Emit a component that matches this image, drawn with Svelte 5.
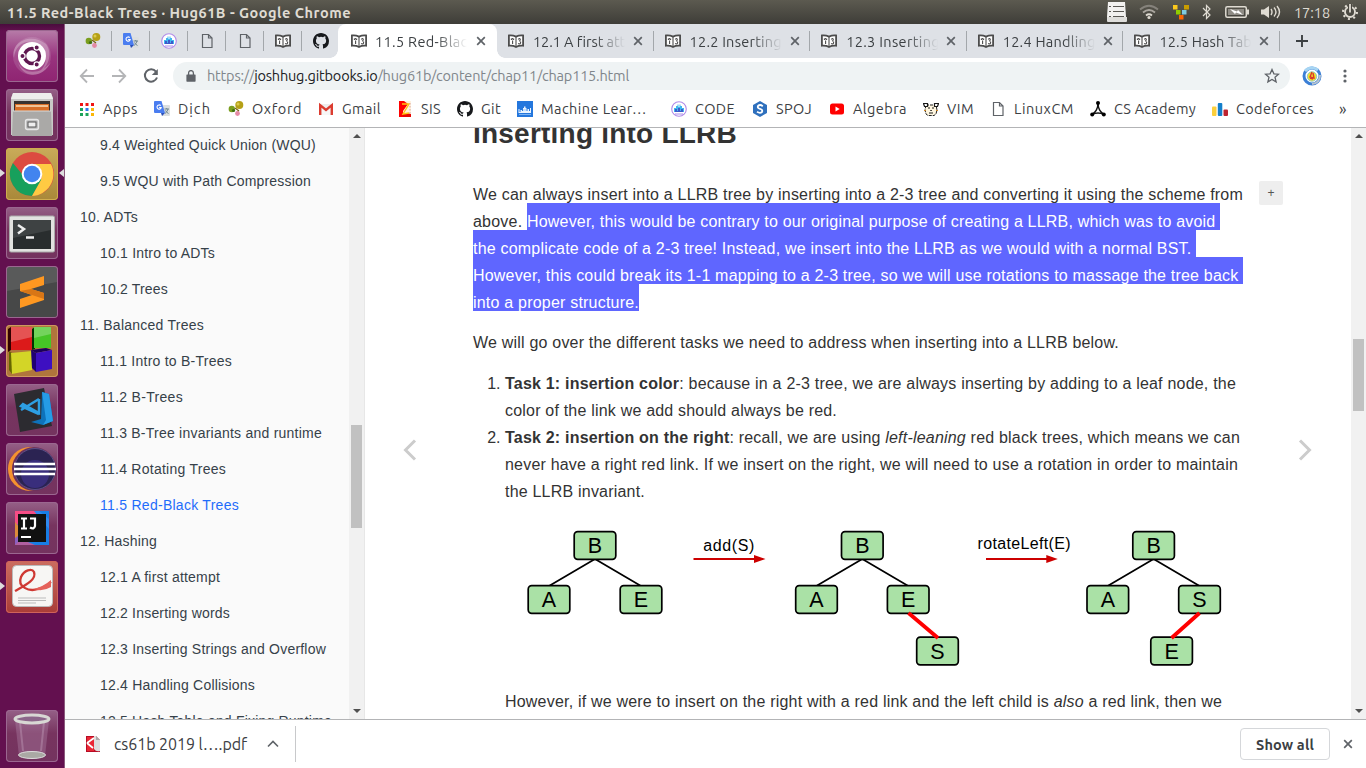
<script>
  // Spreads the letters of a label so that it fills the given width.
  function fit(node, width) {
    const natural = node.getBoundingClientRect().width;
    const count = [...node.textContent].length;
    node.style.letterSpacing = (width - natural) / count + 'px';
  }

  const launcher = ['ubuntu', 'files', 'chrome', 'terminal', 'sublime', 'blocks', 'vscode', 'eclipse', 'idea', 'pdf'];
  const running = ['chrome', 'blocks', 'pdf'];
  const pinned = ['oxford', 'translate', 'code', 'doc', 'doc', 'book', 'github'];
  const tabs = [
    { title: '12.1 A first attempt', width: 126 },
    { title: '12.2 Inserting words', width: 137 },
    { title: '12.3 Inserting Strings', width: 145 },
    { title: '12.4 Handling Collisions', width: 160 },
    { title: '12.5 Hash Table and', width: 133 }
  ];
  const bookmarks = [
    ['apps', 'Apps', 75, 35],
    ['translate', 'Dịch', 74, 33],
    ['oxford', 'Oxford', 90, 50],
    ['gmail', 'Gmail', 79, 39],
    ['sis', 'SIS', 60, 20],
    ['github', 'Git', 60, 20],
    ['ml', 'Machine Lear…', 154, 106],
    ['code', 'CODE', 81, 40],
    ['spoj', 'SPOJ', 77, 36],
    ['youtube', 'Algebra', 94, 54],
    ['vim', 'VIM', 67, 27],
    ['doc', 'LinuxCM', 100, 60],
    ['csa', 'CS Academy', 122, 82],
    ['cf', 'Codeforces', 127, 78]
  ];
  const chapters = [
    [1, '9.4 Weighted Quick Union (WQU)', 216],
    [1, '9.5 WQU with Path Compression', 211],
    [0, '10. ADTs', 58],
    [1, '10.1 Intro to ADTs', 115],
    [1, '10.2 Trees', 68],
    [0, '11. Balanced Trees', 124],
    [1, '11.1 Intro to B-Trees', 132],
    [1, '11.2 B-Trees', 83],
    [1, '11.3 B-Tree invariants and runtime', 222],
    [1, '11.4 Rotating Trees', 126],
    [1, '11.5 Red-Black Trees', 139],
    [0, '12. Hashing', 77],
    [1, '12.1 A first attempt', 120],
    [1, '12.2 Inserting words', 130],
    [1, '12.3 Inserting Strings and Overflow', 226],
    [1, '12.4 Handling Collisions', 155],
    [1, '12.5 Hash Table and Fixing Runtime', 232]
  ];
  const nodes = [
    ['B', 595, 545.5], ['A', 549, 599.5], ['E', 641, 599.5],
    ['B', 862.3, 545.5], ['A', 816.5, 599.5], ['E', 908.2, 599.5], ['S', 937.5, 651],
    ['B', 1153.6, 545.5], ['A', 1107.8, 599.5], ['S', 1199.5, 599.5], ['E', 1171.6, 651]
  ];
  const edges = [595, 862.3, 1153.6];
</script>

{#snippet icon(name)}
  <svg class="i16" viewBox="0 0 16 16">
    {#if name === 'oxford'}
      <circle cx="3.800" cy="8" r="3.200" fill="#7a9e1e" /><circle cx="11.300" cy="4" r="4" fill="#b5a016" /><circle cx="9.500" cy="12.500" r="2.400" fill="#e58aa5" />
      <circle cx="5.500" cy="9.500" r="1.600" fill="#3f6d10" /><circle cx="10" cy="3" r="1.500" fill="#dccb4a" /><path d="M7 7l4 3" stroke="#776017" stroke-width="1.300" />
    {:else if name === 'translate'}
      <path d="M7 4h8q1 0 1 1v9q0 1-1 1H8z" fill="#dcdfe0" /><path d="M1 0h6.500l3.500 12H1Q0 12 0 11V1q0-1 1-1z" fill="#4a7df0" /><path d="M7 12h4l-3 3z" fill="#2b50b8" />
      <path d="M6.700 4.600A2.100 2.100 0 1 0 7.200 6.500H5.100" fill="none" stroke="#fff" stroke-width="1.100" /><path d="M10.500 8h4.500M12.700 7v1M14 8q-.7 3-3 4.500M11.500 9.500q1 2 3 3" stroke="#6f8790" fill="none" />
    {:else if name === 'code'}
      <circle cx="8" cy="8" r="7.300" fill="#fff" stroke="#b18be8" stroke-width="1.100" /><path d="M3 11V7h2V5h1.500V3.500h1V6h1V3.500h1V5H11v2h2v4z" fill="#3fb7ee" /><path d="M4 11V8h2v2h1V7h2v3h1V8h2v3z" fill="#3e58c9" /><path d="M4 13h8" stroke="#a98bea" />
    {:else if name === 'doc'}
      <path d="M3.500 1.500h6l3.500 3.500v9.500h-9.500zM9.500 1.500V5H13" fill="none" stroke="#5f6368" stroke-width="1.200" />
    {:else if name === 'book'}
      <path d="M.9 2.500Q4.500 2 8 3.600 11.500 2 15.100 2.500v10.200Q11 12.300 8 14 5 12.300.9 12.700z" fill="#fff" stroke="#4c4c4c" stroke-width="1.800" />
      <path d="M8 4v9.500M4.400 5v1.500M4.600 7.500v3.500M3.400 5.500v1.500M5.600 5.500v1.500M10.300 6.500q1.300-2 2 0 0 1.200-1.300 1.800M12.500 8.500q.6 2.200-1.200 2.500l-1.200-.5" fill="none" stroke="#4c4c4c" stroke-width="1.100" />
    {:else if name === 'github'}
      <path fill="#17191c" d="M8 0C3.580 0 0 3.580 0 8c0 3.540 2.290 6.530 5.470 7.590.4.070.55-.17.55-.38v-1.490c-2.010.37-2.530-.49-2.690-.94-.09-.23-.48-.94-.82-1.130-.28-.15-.68-.52-.01-.53.63-.01 1.080.58 1.230.82.72 1.210 1.870.87 2.330.66.070-.52.28-.87.51-1.070-1.780-.2-3.640-.89-3.640-3.950 0-.87.31-1.590.82-2.150-.08-.2-.36-1.020.08-2.120 0 0 .67-.21 2.200.82a7.400 7.400 0 0 1 4 0c1.530-1.040 2.200-.82 2.200-.82.44 1.100.16 1.920.08 2.120.51.56.82 1.270.82 2.150 0 3.070-1.870 3.750-3.650 3.950.29.25.54.73.54 1.480v2.200c0 .21.15.46.55.38A8 8 0 0 0 16 8c0-4.420-3.580-8-8-8z" />
    {:else if name === 'apps'}
      <path d="M1 2h3v3H1zM6.500 2h3v3h-3zM12 2h3v3h-3z" fill="#f01414" /><path d="M1 7h3v3H1z" fill="#1da35a" /><path d="M6.500 7h3v3h-3z" fill="#2f79ee" /><path d="M12 7h3v3h-3z" fill="#fbb709" /><path d="M1 12h3v3H1zM6.500 12h3v3h-3z" fill="#1da35a" /><path d="M12 12h3v3h-3z" fill="#fbb709" />
    {:else if name === 'gmail'}
      <path d="M1 3h14v11H1z" fill="#eee" /><path d="M3 14V6l5 4 5-4v8" fill="#f7f7f7" stroke="#ddd" stroke-width=".5" /><path d="M2.200 14V4.200L8 9l5.800-4.800V14" fill="none" stroke="#dc3c30" stroke-width="2.400" />
    {:else if name === 'sis'}
      <path d="M2 0h12v16H2z" fill="#fff2df" /><path d="M2 0h5l4 3-5 7-4 2z" fill="#f00" /><path d="M2 13l8-1 4 1v3H2z" fill="#e80700" /><path d="M2 0h4v16H2z" fill="#f00" /><path d="M5 3h7L6 13l6-1" fill="none" stroke="#ffc414" stroke-width="1.400" /><path d="M13 2v10" stroke="#d9a4a0" stroke-dasharray="1.500 1.500" />
    {:else if name === 'ml'}
      <path d="M0 0h16v16H0z" fill="#2477dd" /><path d="M1.500 12V8h1v3h1V9H5v1h1V7h1V5.500h1.500V7h1v3h1V8H12v2h1V7h1v5z" fill="#e9f4ff" /><path d="M2 13.500h12M7 8v2M9 8v2" stroke="#8fc2fa" stroke-width=".8" />
    {:else if name === 'spoj'}
      <path d="M8 0l7 4v8l-7 4-7-4V4z" fill="#2f70bd" /><path d="M10.800 5.200Q8 3 6 5q-1 2 2 2.800T10 11q-2 1.700-5-.2" fill="none" stroke="#fff" stroke-width="1.800" />
    {:else if name === 'youtube'}
      <rect x="1" y="2.500" width="14" height="11" rx="2.500" fill="#f00" /><path d="M6.500 5.500v5l4.200-2.500z" fill="#fff" />
    {:else if name === 'vim'}
      <path d="M3 4h10l1 5-1 4-2 1.500H5L3 13 2 9z" fill="#fff6df" stroke="#222" stroke-width="1" stroke-dasharray="3 1" /><path d="M.5 2.500h4v3h-3zM11.500 2.500h4l-1 3h-3z" fill="#fff" stroke="#181818" stroke-width="1.200" /><path d="M5 7h2M9 7h2M7.300 9.500h1.500M6 12h4" stroke="#181818" stroke-width="1.200" /><path d="M1 9.500h2M13 9.500h2" stroke="#c98629" />
    {:else if name === 'csa'}
      <path d="M8 2c0 7-3 9-6 11.500 4-2 8-2 12 0C11 11 8 9 8 2" fill="#fff" stroke="#111" stroke-width="1.500" /><circle cx="8" cy="2" r="2" /><circle cx="2.200" cy="13.500" r="2" /><circle cx="13.800" cy="13.500" r="2" />
    {:else if name === 'cf'}
      <rect x="0" y="5.500" width="4.500" height="9.500" rx="1" fill="#fbcf3c" /><rect x="5.800" y="2" width="4.500" height="13" rx="1" fill="#147fcb" /><rect x="11.500" y="8.500" width="4.500" height="6.500" rx="1" fill="#bd2430" />
    {/if}
  </svg>
{/snippet}

{#snippet app(name)}
  <svg class="i52" viewBox="0 0 52 52">
    {#if name === 'ubuntu'}
      <circle cx="26" cy="26" r="19" fill="#fff" opacity=".12" />
      <path d="M8 28C4 12 25 2 40 14 48 25 41 40 30 44 45 35 41 20 31 14 20 8 9 15 8 28zM12 32c5 13 23 13 33 0-8 17-29 17-33 0z" fill="#fff" opacity=".25" />
      <circle cx="26" cy="26" r="14" fill="#fff" /><circle cx="26" cy="26" r="7.500" fill="none" stroke="#5f1750" stroke-width="3.400" />
      <g fill="#5f1750" stroke="#fff" stroke-width="1.200"><circle cx="16.500" cy="26" r="2.600" /><circle cx="30.700" cy="17.500" r="2.600" /><circle cx="30.700" cy="34.500" r="2.600" /></g>
    {:else if name === 'files'}
      <path d="M7 4h38l2 5v37H5V9z" fill="#c9c9c7" /><path d="M7 4h38l2 6H5z" fill="#ededeb" /><path d="M8 12h36v10H8z" fill="#393330" /><path d="M9 15h34v7H9z" fill="#d86f28" /><path d="M10 17h32" stroke="#fbe1bb" stroke-width="1.500" /><path d="M7 22h38l1 25H6z" fill="#aaa9a7" /><path d="M7 22h38" stroke="#d9d9d7" />
      <rect x="19.500" y="30.500" width="13" height="10" rx="2" fill="#bbb" stroke="#e7e7e7" stroke-width="1.300" /><rect x="22" y="33" width="8" height="5" fill="#eee" stroke="#555" />
    {:else if name === 'chrome'}
      <circle cx="26" cy="26" r="22" fill="#dc4b40" /><path d="M6.900 15A22 22 0 0 0 26 48l10-17H26q-9 0-10-5z" fill="#17a05c" /><path d="M45 16H26q9 2 10 10 0 3-1 6l-9 16A22 22 0 0 0 45 16z" fill="#ffca43" /><circle cx="26" cy="26" r="10.300" fill="#fff" /><circle cx="26" cy="26" r="8.300" fill="#4284ef" />
    {:else if name === 'terminal'}
      <rect x="3.500" y="9" width="45" height="36" rx="1.500" fill="#e2e2e0" stroke="#aaa" /><rect x="7" y="13" width="38" height="29" fill="#292d2e" /><path d="M7 13h38v10L7 31z" fill="#fff" opacity=".1" /><path d="M12 18l6 4-6 4.500M20 30.500h8" fill="none" stroke="#eee" stroke-width="2.500" />
    {:else if name === 'sublime'}
      <rect x="1" y="1" width="50" height="50" rx="3" fill="#474848" /><path d="M1 4q0-3 3-3h44q3 0 3 3v12L1 25z" fill="#fff" opacity=".1" /><path d="M14 18l24-8v9L25 23l13 4v7L14 42v-9l12-4-12-4z" fill="#ff9821" /><path d="M14 25l12 4 12 4v-6l-13-4z" fill="#d87616" />
    {:else if name === 'blocks'}
      <path d="M2 4l3-2v23l-3 2z" fill="#300" /><path d="M5 2h21v23H5z" fill="#dc1a1a" /><path d="M26 4l3-2v22l-3 1z" fill="#030" /><path d="M28 2h17v21H28z" fill="#46c526" /><path d="M3 26l3 2v21l-3-4z" fill="#660" /><path d="M5 28l21-2v19L6 49z" fill="#d3d527" /><path d="M25 25l15-2 6 2-16 3z" fill="#1a0058" /><path d="M30 28l16-3v19l-16 3z" fill="#3d0fc1" /><path d="M25 25l5 3v19l-4-4z" fill="#200073" /><path d="M5 2h21v10L5 17zM28 2h17v7l-17 4z" fill="#fff" opacity=".25" />
    {:else if name === 'vscode'}
      <path d="M8 10l30-6 8 38-32 6z" fill="#2c2b30" /><path d="M25 38l10-3 1-27 7 2 4 27-10 4z" fill="#0e72ba" /><path d="M36 8l7 2 4 27-10 4 3-5z" fill="#259be6" /><path d="M33 15v14L17 20l-2 2 18 8M15 26L33 15" fill="none" stroke="#2d9fe4" stroke-width="2.500" />
    {:else if name === 'eclipse'}
      <circle cx="24" cy="26" r="22" fill="#f5922f" /><circle cx="28" cy="26" r="22" fill="#6d315b" /><circle cx="29" cy="26" r="20.500" fill="#2b2352" stroke="#5a4f86" /><circle cx="29" cy="31" r="14" fill="#42369a" opacity=".6" /><path d="M8 21h41M8 26h42M8 31h41" stroke="#fff" stroke-width="2.500" />
    {:else if name === 'idea'}
      <path d="M9 9h34v34H9z" fill="#187de5" /><path d="M9 9h24L9 32z" fill="#f54c85" /><path d="M9 22h8v21H9z" fill="#8b60c1" /><path d="M9 20l5 6-2 8-3 2z" fill="#dc8b3a" /><path d="M33 9l10 8v10L28 9z" fill="#2f8af0" /><path d="M9 43l6-6 14 6z" fill="#b05fa0" /><rect x="12" y="12" width="28" height="28" fill="#111" />
      <path d="M15 16.500h6M18 16v10M15 26.500h6M24 16.500h5V24q-1 4-5 1.500M15 35h10" stroke="#fff" stroke-width="2.200" fill="none" />
    {:else if name === 'pdf'}
      <rect x="6.500" y="4.500" width="40" height="41" rx="4" fill="#f7f6f4" stroke="#bbb" /><path d="M9 30C18 25 31 19 28 11c-2-4-10-2-13 5-4 10 8 15 17 12q6-1 13-7" fill="none" stroke="#cf3933" stroke-width="2.300" /><path d="M27 28q10-2 18-9v7q-8 5-18 2z" fill="#e5625b" /><path d="M12 37h28M12 39.500h28M12 42h18" stroke="#bbb" />
    {:else if name === 'trash'}
      <path d="M9 10h34l-4 36q-13 5-26 0z" fill="#b58caf" opacity=".35" /><path d="M14 12l3 29M38 12l-3 29" stroke="#d5b9d1" opacity=".3" stroke-width="2" /><ellipse cx="26" cy="45" rx="13.500" ry="3.500" fill="#aaa9a4" stroke="#ddd" /><ellipse cx="26" cy="9" rx="17" ry="4" fill="#8c668a" stroke="#d8d8d4" stroke-width="3" />
    {/if}
  </svg>
{/snippet}

{#snippet cross()}
  <svg class="cross" viewBox="0 0 10 10"><path d="M1.200 1.200l7.600 7.600M8.800 1.200L1.200 8.800" stroke="#5f6368" stroke-width="1.700" /></svg>
{/snippet}

<div class="desktop">
  <header class="panel">
    <b><span use:fit={344}>11.5 Red-Black Trees · Hug61B - Google Chrome</span></b>
    <div class="tray">
      <svg width="22" height="24" viewBox="0 0 22 24"><path d="M2 2h17l1 15H1z" fill="#f2f1ef" /><path d="M1 17h20v4q0 1-1 1H2q-1 0-1-1z" fill="#dfdedb" /><path d="M3 6.500h2M7 6.500h11M3 11.500h2M7 11.500h11M3 16.500h2M7 16.500h11" stroke="#5a5853" stroke-width="1.200" /></svg>
      <svg class="wifi" width="20" height="24" viewBox="0 0 20 24"><g fill="none" stroke-width="1.800"><path d="M1 9.500q9-7.500 18 0" stroke="#85827b" /><path d="M4 12.500q6-5 12 0" stroke="#aaa69f" /><path d="M7 15.500q3-2.500 6 0" stroke="#dfdbd2" /></g><circle cx="10" cy="17.500" r="1.600" fill="#dfdbd2" /></svg>
      <svg class="grid" width="16" height="24" viewBox="0 0 16 24"><path d="M0 5h4.500v4.500H0z" fill="#fcc91c" /><path d="M11 5h5v4.500h-5z" fill="#c99d00" /><path d="M3 10h4.500v4.500H3z" fill="#92cd00" /><path d="M9 10h4.500v4.500H9z" fill="#7ecbe0" /><path d="M6 15h4.500v4.500H6z" fill="#fe6601" /></svg>
      <svg class="bt" width="10" height="24" viewBox="0 0 10 24"><path d="M1 8l7 7-3.500 3.500v-13L8 9l-7 7" fill="none" stroke="#dfdbd2" stroke-width="1.200" /></svg>
      <svg class="bat" width="24" height="24" viewBox="0 0 24 24"><rect x=".8" y="6.800" width="20.500" height="10.500" rx="1.500" fill="none" stroke="#dfdbd2" stroke-width="1.500" /><path d="M3 9h16v6H3z" fill="#8f8c85" /><path d="M22 9.500h2v5h-2z" fill="#dfdbd2" /><path d="M5 9l7 2.500 1-1.500 5 5-7-2.500-1 1.500z" fill="#fff" /></svg>
      <svg class="snd" width="22" height="24" viewBox="0 0 22 24"><path d="M1 9.500h3L9 6v12l-5-3.500H1z" fill="#dfdbd2" /><path d="M11 9q2 3 0 6M14 7.500q4 4.500 0 9M17 6q5 6 0 12" fill="none" stroke="#dfdbd2" stroke-width="1.400" /></svg>
      <span class="clock"><span use:fit={36}>17:18</span></span>
      <svg class="gear" width="16" height="24" viewBox="0 0 16 24"><circle cx="8" cy="12" r="5" fill="none" stroke="#dfdbd2" stroke-width="1.900" /><circle cx="8" cy="12" r="7" fill="none" stroke="#dfdbd2" stroke-width="2" stroke-dasharray="2 3.500" /><path d="M6 4h4v8H6z" fill="#48463f" /><path d="M8 4v8.500" stroke="#dfdbd2" stroke-width="1.800" /></svg>
    </div>
  </header>

  <div class="workspace">
    <nav class="launcher">
      {#each launcher as name}
        <div class="slot {name}">
          {@render app(name)}
          {#if running.includes(name)}<i class="pip"></i>{/if}
          {#if name === 'chrome'}<i class="pip right"></i>{/if}
        </div>
      {/each}
      <div class="slot trash">{@render app('trash')}</div>
    </nav>

    <section class="browser">
      <div class="tabs">
        {#each pinned as name, i}
          <div class="pin" class:last={i === 6}>{@render icon(name)}</div>
        {/each}
        <div class="tab active">{@render icon('book')}<div class="title"><span use:fit={141}>11.5 Red-Black Trees</span></div>{@render cross()}</div>
        {#each tabs as tab}
          <div class="tab">{@render icon('book')}<div class="title"><span use:fit={tab.width}>{tab.title}</span></div>{@render cross()}</div>
        {/each}
        <svg class="plus" viewBox="0 0 12 12"><path d="M6 0v12M0 6h12" stroke="#3c4043" stroke-width="1.900" /></svg>
      </div>

      <div class="toolbar">
        <svg class="i16" viewBox="0 0 16 16"><path d="M15 8H2M8 1.500L1.700 8 8 14.500" fill="none" stroke="#b4b5b7" stroke-width="1.800" /></svg>
        <svg class="i16" viewBox="0 0 16 16"><path d="M1 8h13M8 1.500L14.300 8 8 14.500" fill="none" stroke="#b4b5b7" stroke-width="1.800" /></svg>
        <svg class="i16" viewBox="0 0 16 16"><path d="M13 3.600A6.200 6.200 0 1 0 14 9.500" fill="none" stroke="#5f6368" stroke-width="2" /><path d="M14.800 1v6H8.800z" fill="#5f6368" /></svg>
        <div class="omnibox">
          <svg class="lock" viewBox="0 0 10 12"><path d="M1 4.500h8q.6 0 .6.600v6q0 .6-.6.600H1q-.6 0-.6-.6v-6q0-.6.600-.6z" fill="#5f6368" /><path d="M2.600 5V3a2.400 2.400 0 0 1 4.800 0v2" fill="none" stroke="#5f6368" stroke-width="1.300" /></svg>
          <div class="url"><span use:fit={422}>https://<em>joshhug.gitbooks.io</em>/hug61b/content/chap11/chap115.html</span></div>
          <svg class="i16 star" viewBox="0 0 16 16"><path d="M8 1.500l1.900 4.300 4.600.4-3.500 3 1.100 4.600L8 11.400l-4.100 2.400L5 9.200l-3.500-3 4.600-.4z" fill="none" stroke="#5f6368" stroke-width="1.300" /></svg>
        </div>
        <svg class="avatar" viewBox="0 0 20 20"><circle cx="10" cy="10" r="8" fill="#fff" stroke="#3b7fd6" stroke-width="3" /><path d="M3 5Q9-1 16 4" stroke="#a7d5f3" stroke-width="3" fill="none" /><path d="M18 9q0 8-8 9" stroke="#b8c4cf" stroke-width="2" fill="none" /><circle cx="10" cy="10.500" r="4.700" fill="#f3e22d" stroke="#8fc9c6" /><path d="M10 6l-2 5 4 1-1-5M8 12l3 1" stroke="#d93a2b" stroke-width="1.400" fill="none" /></svg>
        <svg class="dots" viewBox="0 0 4 14"><g fill="#5f6368"><circle cx="2" cy="2" r="1.600" /><circle cx="2" cy="7" r="1.600" /><circle cx="2" cy="12" r="1.600" /></g></svg>
      </div>

      <div class="bookmarks">
        {#each bookmarks as [name, label, width, text]}
          <div class="mark" style:width="{width}px">{@render icon(name)}<span use:fit={text}>{label}</span></div>
        {/each}
        <span class="more">»</span>
      </div>

      <div class="page">
        <aside>
          <ul>
            {#each chapters as [level, label, width]}
              <li class:sub={level} class:current={label.startsWith('11.5')}><span use:fit={width}>{label}</span></li>
            {/each}
          </ul>
          <div class="scroll side"><i class="up"></i><b></b><i class="down"></i></div>
        </aside>

        <main>
          <div class="gutter left"><svg width="14" height="22" viewBox="0 0 14 22"><path d="M12 1.500L2.500 11l9.500 9.500" fill="none" stroke="#ccc" stroke-width="3" /></svg></div>
          <article>
            <h2><span use:fit={264}>Inserting into LLRB</span></h2>
            <div class="selected">
              <div><span use:fit={770}>We can always insert into a LLRB tree by inserting into a 2-3 tree and converting it using the scheme from</span></div>
              <div><span use:fit={54}>above.{' '}</span><mark><span use:fit={693}>However, this would be contrary to our original purpose of creating a LLRB, which was to avoid{' '}</span></mark></div>
              <div><mark><span use:fit={723}>the complicate code of a 2-3 tree! Instead, we insert into the LLRB as we would with a normal BST.{' '}</span></mark></div>
              <div><mark><span use:fit={770}>However, this could break its 1-1 mapping to a 2-3 tree, so we will use rotations to massage the tree back{' '}</span></mark></div>
              <div><mark><span use:fit={166}>into a proper structure.</span></mark></div>
            </div>
            <p><span use:fit={646}>We will go over the different tasks we need to address when inserting into a LLRB below.</span></p>
            <ol>
              <li><div><span use:fit={731}><strong>Task 1: insertion color</strong>: because in a 2-3 tree, we are always inserting by adding to a leaf node, the</span></div>
                <div><span use:fit={332}>color of the link we add should always be red.</span></div></li>
              <li><div><span use:fit={735}><strong>Task 2: insertion on the right</strong>: recall, we are using <em>left-leaning</em> red black trees, which means we can</span></div>
                <div><span use:fit={733}>never have a right red link. If we insert on the right, we will need to use a rotation in order to maintain</span></div>
                <div><span use:fit={140}>the LLRB invariant.</span></div></li>
            </ol>
            <svg class="figure" width="738" height="183" viewBox="505 505 738 183">
              {#each edges as x}
                <path d="M{x - 46} 586L{x} 559l46 27" fill="none" stroke="#000" stroke-width="1.700" />
              {/each}
              {#each nodes as [label, x, y]}
                <rect x={x - 20.8} y={y - 13.8} width="41.600" height="27.600" rx="3.500" fill="#aae1a6" stroke="#000" stroke-width="1.700" />
                <text x={x} y={y + 7.5} font-size="21.500" text-anchor="middle">{label}</text>
              {/each}
              <path d="M908.500 613l29.500 25M1199.500 613l-28 25" stroke="#f00" stroke-width="3.800" />
              <path d="M693.500 559H756M986 559h62" stroke="#c00" stroke-width="1.900" />
              <path d="M754 555l11.500 4-11.500 4zM1046.300 555l11.500 4-11.500 4z" fill="#c00" />
              <text x="703.300" y="551" font-size="16" textLength="51">add(S)</text>
              <text x="977.500" y="549" font-size="16" textLength="93">rotateLeft(E)</text>
            </svg>
            <p class="next"><span use:fit={717}>However, if we were to insert on the right with a red link and the left child is <em>also</em> a red link, then we</span></p>
          </article>
          <div class="gutter right"><span class="add">+</span><svg width="14" height="22" viewBox="0 0 14 22"><path d="M2 1.500l9.500 9.500L2 20.500" fill="none" stroke="#ccc" stroke-width="3" /></svg></div>
          <div class="scroll body"><i class="up"></i><b></b><i class="down"></i></div>
        </main>
      </div>

      <footer>
        <div class="file">
          <svg class="i16" viewBox="0 0 16 16"><path d="M1 0h10l4 4v12H1z" fill="#b60c25" /><path d="M2 1h7v14H2z" fill="#e92735" /><path d="M9 0h2l4 4v11q-4 1-6-2z" fill="#ddd" /><path d="M2 7l7-5M2 7l6 5" stroke="#fff" stroke-width="1.700" /><path d="M11 0v4h4" fill="#aaa" /></svg>
          <span class="name"><span use:fit={133}>cs61b 2019 l….pdf</span></span>
          <svg class="caret" viewBox="0 0 12 8"><path d="M1 6.500l5-5 5 5" fill="none" stroke="#5f6368" stroke-width="1.600" /></svg>
        </div>
        <button><span use:fit={58}>Show all</span></button>
        {@render cross()}
      </footer>
    </section>
  </div>
</div>

<style>
  :global(body) { overflow: hidden; }
  * { box-sizing: border-box; }
  svg { display: block; flex: none; }
  .desktop { width: 1366px; height: 768px; display: flex; flex-direction: column; font-family: Ubuntu, "Noto Sans", sans-serif; color: #3c4043; background: #fff; overflow: hidden; }
  span { white-space: pre; }
  .panel { height: 24px; flex: none; display: flex; align-items: center; justify-content: space-between; padding: 0 8px 0 7px; background: linear-gradient(#5c5a50, #3e3d38); color: #dfdbd2; font-size: 14.500px; }
  .tray { display: flex; align-items: center; }
  .wifi, .bat { margin-left: 11px; }
  .grid { margin-left: 14px; }
  .bt, .bat { margin-left: 13px; }
  .snd { margin-left: 11px; }
  .clock { width: 36px; margin-left: 12px; }
  .gear { margin-left: 12px; }
  .workspace { flex: 1; min-height: 0; display: flex; }

  .launcher { width: 65px; flex: none; padding: 6px 0 6px 6px; display: flex; flex-direction: column; gap: 7px; background: linear-gradient(#4a0c3d, #63104f 7px); border-right: 1px solid #8b5a7d; }
  .slot { position: relative; width: 52px; height: 52px; border-radius: 4px; background: linear-gradient(#956087, #77345f 45%, #74335f); box-shadow: inset 0 0 0 1px #9b6790; flex: none; }
  .slot.ubuntu { background: linear-gradient(#b77da9, #99347f 50%, #8f2472); }
  .slot.chrome { background: linear-gradient(#c9ab59, #a98839); box-shadow: inset 0 0 0 1px #cfac4f; }
  .slot.blocks { background: #b0753c; box-shadow: inset 0 0 0 1px #cf985e; }
  .slot.pdf { background: linear-gradient(#cb6d60, #a93c37); box-shadow: inset 0 0 0 1px #cf635a; }
  .slot.trash { margin-top: auto; }
  .i52 { width: 52px; height: 52px; }
  .pip { position: absolute; left: -6px; top: 21px; border: solid transparent; border-width: 4px 0 4px 5px; border-left-color: #ddd; }
  .pip.right { left: auto; right: -6px; border-width: 4px 5px 4px 0; border-right-color: #ddd; }

  .browser { flex: 1; min-width: 0; display: flex; flex-direction: column; }
  .i16 { width: 16px; height: 16px; }
  .tabs { height: 34px; flex: none; display: flex; background: #dee1e6; padding-left: 9px; font-size: 14.500px; }
  .pin { width: 38px; display: flex; align-items: center; justify-content: center; position: relative; }
  .pin::after, .tab:not(.active)::after { content: ''; position: absolute; right: 0; top: 7px; width: 1px; height: 20px; background: #a3a7ab; }
  .pin.last::after { display: none; }
  .pin.last { width: 37px; }
  .tab { position: relative; width: 156.600px; flex: none; display: flex; align-items: center; padding-left: 11px; }
  .tab.active { background: #fff; border-radius: 8px 8px 0 0; width: 159px; margin-left: -1px; padding-left: 13px; }
  .tab.active::before, .tab.active::after { content: ''; position: absolute; bottom: 0; width: 8px; height: 8px; left: -8px; background: radial-gradient(circle at 0 0, transparent 7.500px, #fff 8px); }
  .tab.active::after { left: auto; right: -8px; background: radial-gradient(circle at 100% 0, transparent 7.500px, #fff 8px); }
  .title { width: 94px; margin: 0 7px 0 8px; overflow: hidden; mask-image: linear-gradient(90deg, #000 65%, transparent 98%); }
  .tab:not(.active) .title { margin-left: 9px; margin-right: 6px; }
  .cross { width: 10px; height: 10px; }
  .plus { width: 12px; height: 12px; margin: 11px 0 0 16px; }

  .toolbar { height: 36px; flex: none; display: flex; align-items: center; padding: 0 0 0 14px; gap: 16px; }
  .omnibox { width: 1117px; height: 28px; margin-left: -2px; border-radius: 14px; background: #eff3f4; display: flex; align-items: center; padding: 0 10px 0 13px; font-size: 14.500px; color: #80868b; }
  .lock { width: 10px; height: 12px; margin-right: 11px; }
  .url { flex: 1; margin-top: -1px; }
  .url em { font-style: normal; color: #202124; }
  .avatar { width: 20px; height: 20px; margin-left: -4px; }
  .dots { width: 4px; height: 14px; margin-left: 5px; }

  .bookmarks { height: 34px; flex: none; display: flex; padding: 0 0 4px 14px; border-bottom: 1px solid #b3b4b6; font-size: 14.500px; }
  .mark { display: flex; align-items: center; gap: 8px; flex: none; }
  .more { align-self: center; font-size: 16px; }

  .page { height: 591px; flex: none; display: flex; overflow: hidden; font-family: "Liberation Sans", Arial, sans-serif; }
  aside { width: 300px; flex: none; display: flex; justify-content: space-between; background: #fafafa; border-right: 1px solid #e7e7e7; }
  aside ul { list-style: none; margin: -1px 0 0; padding: 0; width: 284px; font-size: 14px; color: #364149; }
  aside li { height: 36px; line-height: 36px; padding-left: 15px; }
  aside li.sub { padding-left: 35px; }
  aside li.current { color: #1f6cfb; }
  .scroll { width: 15px; flex: none; height: 591px; background: #f1f1f1; display: flex; flex-direction: column; align-items: center; }
  .scroll b { width: 11px; background: #c1c1c1; }
  .scroll i { border: solid transparent; border-width: 0 4px 4px; border-bottom-color: #505050; margin-top: 6px; }
  .scroll i.down { border-width: 4px 4px 0; border-top-color: #505050; margin: auto 0 6px; }
  .side b { height: 103px; margin-top: 287px; }
  .body b { height: 72px; margin-top: 201px; }

  main { flex: 1; display: flex; color: #333; font-size: 16px; line-height: 27px; }
  .gutter { width: 108px; flex: none; }
  .gutter.left svg { margin: 311px 0 0 38px; }
  .gutter.right { padding: 53px 0 0 16px; }
  .gutter.right svg { margin: 234px 0 0 39px; }
  .add { display: block; width: 24px; height: 24px; border-radius: 2px; background: #eee; color: #555; font-size: 12px; line-height: 24px; text-align: center; }
  article { width: 770px; flex: none; }
  h2 { margin: -12px 0 0; height: 60px; font-size: 28px; line-height: 36px; }
  .selected { height: 153px; }
  .selected div { height: 27px; line-height: 37px; display: flex; }
  mark { background: #5f66ff; color: #fff; height: 27px; }
  p { margin: 0; height: 41px; }
  ol { margin: 0; padding-left: 32px; }
  .figure { margin-left: 32px; }
  .figure text { fill: #000; }
  .next { margin-left: 32px; }

  footer { height: 49px; flex: none; border-top: 1px solid #b3b4b6; display: flex; align-items: center; background: #fff; }
  .file { width: 231px; height: 36px; border-right: 1px solid #c8c9cb; display: flex; align-items: center; padding-left: 20px; }
  .name { width: 133px; margin: 0 20px 0 13px; font-size: 16px; }
  .caret { width: 12px; height: 8px; }
  button { margin-left: auto; margin-right: 13px; width: 90px; height: 32px; background: #fff; border: 1px solid #d5d7da; border-radius: 4px; padding: 0; font: 600 14.500px Ubuntu, "Noto Sans", sans-serif; color: #3c4043; }
  footer > :global(.cross) { margin-right: 13px; }
</style>
